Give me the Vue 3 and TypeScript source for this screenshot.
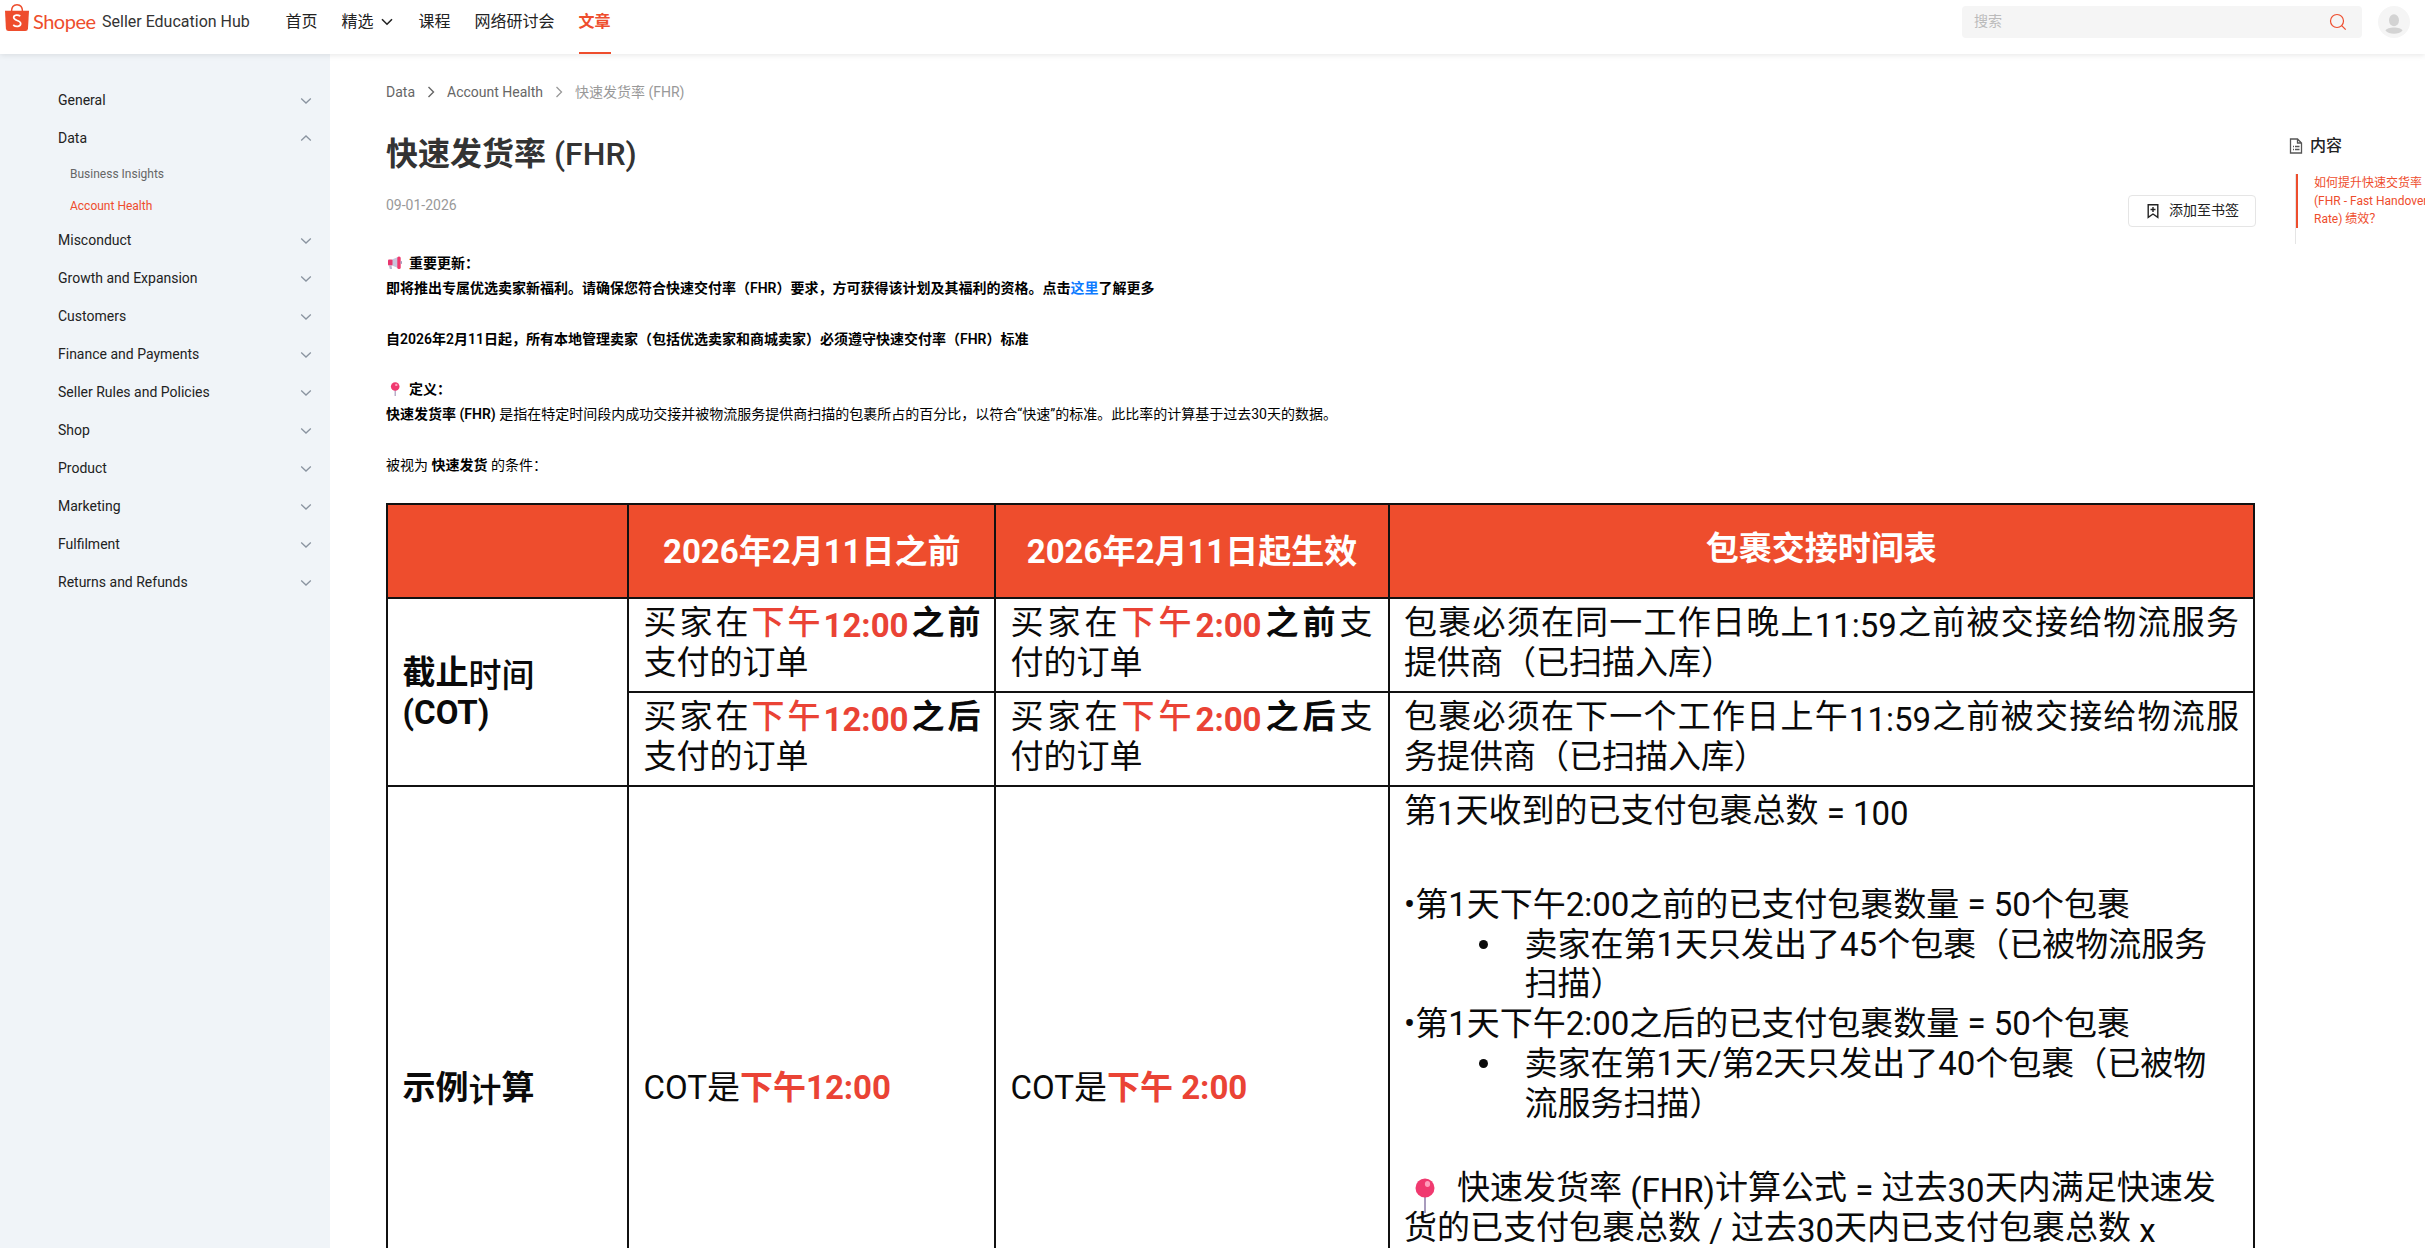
<script setup lang="ts">
interface MenuItem {
  label: string
  open?: boolean
  children?: { label: string; active?: boolean }[]
}

interface Run {
  t: string
  c?: string
}

interface Line {
  runs: Run[]
  width?: number
}

const menu: MenuItem[] = [
  { label: 'General' },
  {
    label: 'Data',
    open: true,
    children: [{ label: 'Business Insights' }, { label: 'Account Health', active: true }],
  },
  { label: 'Misconduct' },
  { label: 'Growth and Expansion' },
  { label: 'Customers' },
  { label: 'Finance and Payments' },
  { label: 'Seller Rules and Policies' },
  { label: 'Shop' },
  { label: 'Product' },
  { label: 'Marketing' },
  { label: 'Fulfilment' },
  { label: 'Returns and Refunds' },
]

const cutoff = (word: string): Line[][] => [
  [
    {
      width: 337,
      runs: [{ t: '买家在' }, { t: '下午', c: 'red semi' }, { t: '12:00', c: 'red bold low' }, { t: word, c: 'bold' }],
    },
    { runs: [{ t: '支付的订单' }], width: 162 },
  ],
  [
    {
      width: 362,
      runs: [{ t: '买家在' }, { t: '下午', c: 'red semi' }, { t: '2:00', c: 'red bold low' }, { t: word, c: 'bold' }, { t: '支' }],
    },
    { runs: [{ t: '付的订单' }], width: 130 },
  ],
]

const rows: Line[][][] = [
  [
    ...cutoff('之前'),
    [
      { width: 835, runs: [{ t: '包裹必须在同一工作日晚上' }, { t: '11:59', c: 'low' }, { t: '之前被交接给物流服务' }] },
      { runs: [{ t: '提供商（已扫描入库）' }] },
    ],
  ],
  [
    ...cutoff('之后'),
    [
      { width: 835, runs: [{ t: '包裹必须在下一个工作日上午' }, { t: '11:59', c: 'low' }, { t: '之前被交接给物流服' }] },
      { runs: [{ t: '务提供商（已扫描入库）' }] },
    ],
  ],
]
</script>

<template>
  <div class="page">
    <header class="top">
      <svg class="bag" width="26" height="29" viewBox="0 0 26 29">
        <path d="M7.500 8.500C7.500 4 10 1.700 13 1.700S18.500 4 18.500 8.500" fill="none" stroke="#ee4d2d" stroke-width="1.500" />
        <path d="M1 7.700h24l-1 17.800q-.2 2.500-2.700 2.500H4.600q-2.500 0-2.700-2.500z" fill="#ee4d2d" />
        <path d="M16.300 13.200c-2.200-1.800-6.600-1.600-6.600 1.400 0 3.500 7 2.300 7 6 0 3.300-4.700 3.700-7.500 1.400" fill="none" stroke="#fff" stroke-width="1.700" />
      </svg>
      <span class="brand">Shopee</span>
      <span class="hub">Seller Education Hub</span>
      <nav>
        <a>首页</a>
        <a>精选<svg width="12" height="8" viewBox="0 0 12 8"><path d="M1 1.200l5 5 5-5" fill="none" stroke="#222" stroke-width="1.600" /></svg></a>
        <a>课程</a>
        <a>网络研讨会</a>
        <a class="on">文章</a>
      </nav>
      <div class="search">
        <span>搜索</span>
        <svg width="18" height="18" viewBox="0 0 18 18" fill="none" stroke="#ee4d2d" stroke-width="1.200"><circle cx="8" cy="8" r="6.500" /><path d="M12.700 12.700l4 4" /></svg>
      </div>
      <svg class="avatar" width="32" height="32" viewBox="0 0 32 32">
        <circle cx="16" cy="16" r="16" fill="#f5f5f5" />
        <ellipse cx="16" cy="14.300" rx="5" ry="6" fill="#d3d3d3" />
        <path d="M7.500 24.500c1.500-4 15.500-4 17 0-3.500 4.400-13.500 4.400-17 0z" fill="#d3d3d3" />
      </svg>
    </header>

    <div class="body">
      <aside class="side">
        <template v-for="m in menu" :key="m.label">
          <div class="item">
            <span>{{ m.label }}</span>
            <svg width="12" height="8" viewBox="0 0 12 8" :class="{ up: m.open }"><path d="M1.200 1.500L6 6l4.800-4.500" fill="none" stroke="#8a94a0" stroke-width="1.300" /></svg>
          </div>
          <div v-if="m.children" class="subs">
            <div v-for="s in m.children" :key="s.label" class="sub" :class="{ active: s.active }">{{ s.label }}</div>
          </div>
        </template>
      </aside>

      <main class="main">
        <div class="crumbs">
          <span>Data</span>
          <svg width="8" height="12" viewBox="0 0 8 12"><path d="M1.500 1l5 5-5 5" fill="none" stroke="#666" stroke-width="1.400" /></svg>
          <span>Account Health</span>
          <svg width="8" height="12" viewBox="0 0 8 12"><path d="M1.500 1l5 5-5 5" fill="none" stroke="#999" stroke-width="1.300" /></svg>
          <span class="last">快速发货率 (FHR)</span>
        </div>
        <h1><span class="bold">快速发货率</span> (FHR)</h1>
        <div class="meta">
          <span class="date">09-01-2026</span>
          <button class="mark">
            <svg width="12" height="16" viewBox="0 0 12 16" fill="none" stroke="#222" stroke-width="1.400"><path d="M1.200 1.700h9.600v12.600L6 11l-4.800 3.300zM6 4v5M3.500 6.500h5" /></svg>
            <span>添加至书签</span>
          </button>
        </div>

        <div class="article">
          <p class="b">
            <svg class="emo" width="16" height="14" viewBox="0 0 16 14">
              <path d="M6 3.500L12 1v11L6 9.500z" fill="#c9c4dc" />
              <rect x="2" y="3.500" width="4.500" height="6" rx="1" fill="#e8366f" />
              <path d="M3 9.500h2.500l.6 3.500H3.800z" fill="#b9b3cf" />
              <rect x="11.300" y=".5" width="3.400" height="12.500" rx="1.500" fill="#f0396f" />
              <rect x="14.500" y="5" width="1.500" height="3" rx=".7" fill="#a59cb9" />
            </svg><span>重要更新：</span>
          </p>
          <p class="b">即将推出专属优选卖家新福利。请确保您符合快速交付率（FHR）要求，方可获得该计划及其福利的资格。点击<a>这里</a>了解更多</p>
          <p></p>
          <p class="b">自2026年2月11日起，所有本地管理卖家（包括优选卖家和商城卖家）必须遵守快速交付率（FHR）标准</p>
          <p></p>
          <p class="b">
            <svg class="emo" width="16" height="14" viewBox="0 0 16 14">
              <path d="M9.200 7v7" stroke="#a89bbd" stroke-width="1.200" />
              <circle cx="9.200" cy="4.500" r="4.300" fill="#f0396f" />
              <circle cx="10.300" cy="2.900" r="1.200" fill="#ff9dbb" />
            </svg><span>定义：</span>
          </p>
          <p><b>快速发货率 (FHR)</b> 是指在特定时间段内成功交接并被物流服务提供商扫描的包裹所占的百分比，以符合“快速”的标准。此比率的计算基于过去30天的数据。</p>
          <p></p>
          <p>被视为 <b>快速发货</b> 的条件：</p>
        </div>

        <div class="grid">
          <div class="cell head"></div>
          <div class="cell head"><span class="ln" style="width: 297px">2026年2月11日之前</span></div>
          <div class="cell head"><span class="ln" style="width: 330px">2026年2月11日起生效</span></div>
          <div class="cell head raise"><span>包裹交接时间表</span></div>

          <div class="cell label span2">
            <div><span class="bold">截止</span><span class="mid low">时间</span></div>
            <div class="bold">(COT)</div>
          </div>
          <template v-for="(r, ri) in rows" :key="ri">
            <div v-for="(cell, ci) in r" :key="ci" class="cell">
              <div v-for="(l, li) in cell" :key="li" :class="{ ln: l.width }" :style="l.width ? { width: l.width + 'px' } : {}"><span v-for="(x, xi) in l.runs" :key="xi" :class="x.c">{{ x.t }}</span></div>
            </div>
          </template>

          <div class="cell label"><div class="bold">示例<span class="mid low">计</span>算</div></div>
          <div class="cell center"><div>COT是<span class="red bold">下午12:00</span></div></div>
          <div class="cell center"><div>COT是<span class="red bold">下午 2:00</span></div></div>
          <div class="cell calc">
            <div>第<span class="low">1</span>天收到的已支付包裹总数<span class="low"> = 100</span></div>
            <div class="day">•第1天下午2:00之前的已支付包裹数量 = 50个包裹</div>
            <div class="bullet"><i></i>卖家在第1天只发出了45个包裹（已被物流服务<br />扫描）</div>
            <div>•第1天下午2:00之后的已支付包裹数量 = 50个包裹</div>
            <div class="bullet"><i></i>卖家在第1天/第2天只发出了40个包裹（已被物<br />流服务扫描）</div>
            <div class="formula">
              <svg width="22" height="36" viewBox="0 0 22 36">
                <path d="M11 18v17" stroke="#a89bbd" stroke-width="2" />
                <circle cx="11" cy="10" r="9.500" fill="#f0396f" />
                <ellipse cx="13.500" cy="6" rx="2.600" ry="3" fill="#ff9dbb" />
              </svg><span>快速发货率<span class="low"> (FHR)</span>计算公式<span class="low"> = </span>过去<span class="low">30</span>天内满足快速发</span>
            </div>
            <div>货的已支付包裹总数<span class="low"> / </span>过去<span class="low">30</span>天内已支付包裹总数<span class="low"> x</span></div>
          </div>
        </div>
      </main>

      <aside class="toc">
        <div class="toc-title">
          <svg width="14" height="16" viewBox="0 0 14 16" fill="none" stroke="#555" stroke-width="1.300"><path d="M1.500 1h7l4 4v10h-11zM8.500 1v4h4M4 8.500h1M6 8.500h4.500M4 11.500h1M6 11.500h4.500" /></svg>
          <span>内容</span>
        </div>
        <div class="toc-list"><div class="toc-item">如何提升快速交货率<br />(FHR - Fast Handover<br />Rate) 绩效？</div></div>
      </aside>
    </div>
  </div>
</template>

<style>
body {
  overflow: hidden;
}
</style>

<style scoped>
.page {
  width: 100%;
  height: 100vh;
  overflow: hidden;
  background: #fff;
  font-family: Roboto, 'Noto Sans CJK SC', sans-serif;
  font-size: 14px;
  color: #222;
}
.top {
  position: relative;
  z-index: 2;
  height: 54px;
  box-sizing: border-box;
  display: flex;
  align-items: flex-start;
  padding: 0 15px 0 4px;
  background: #fff;
  box-shadow: 0 1px 6px rgba(0, 0, 0, 0.1);
}
.bag {
  margin-top: 3px;
}
.brand {
  width: 72px;
  padding-left: 3px;
  box-sizing: border-box;
  font: 20px/42px Lato, sans-serif;
  color: #ee4d2d;
  letter-spacing: -0.5px;
}
.hub {
  width: 183.500px;
  font-size: 16px;
  line-height: 43px;
  color: #333;
  white-space: nowrap;
}
nav {
  display: flex;
  gap: 24px;
}
nav a {
  height: 54px;
  box-sizing: border-box;
  font-size: 16px;
  line-height: 43px;
}
nav svg {
  margin: 0 2px 1px 7px;
}
nav .on {
  color: #ee4d2d;
  font-weight: 700;
  border-bottom: 2px solid #ee4d2d;
}
.search {
  margin: 6px 16px 0 auto;
  width: 400px;
  height: 32px;
  box-sizing: border-box;
  padding: 0 15px 0 12px;
  display: flex;
  justify-content: space-between;
  align-items: center;
  background: #f5f5f5;
  border-radius: 4px;
  color: #bbb;
}
.search span {
  margin-bottom: 4px;
}
.avatar {
  margin-top: 6px;
}
.body {
  display: flex;
  height: calc(100% - 54px);
}
.side {
  flex: none;
  width: 330px;
  box-sizing: border-box;
  padding: 27px 18px 0 58px;
  background: #f0f4f8;
}
.item {
  height: 38px;
  display: flex;
  align-items: center;
  justify-content: space-between;
}
.item svg {
  margin-top: 1px;
}
.item svg.up {
  transform: rotate(180deg);
  margin-top: -1px;
}
.subs {
  padding: 1px 0 0 12px;
  height: 63px;
}
.sub {
  height: 32px;
  line-height: 32px;
  font-size: 12px;
  color: #666;
}
.sub.active {
  color: #ee4d2d;
}
.main {
  flex: none;
  width: 1870px;
  margin-left: 56px;
}
.crumbs {
  display: flex;
  align-items: center;
  height: 20px;
  margin-top: 28px;
  gap: 12px;
  color: #666;
  line-height: 20px;
}
.crumbs .last {
  color: #999;
}
h1 {
  margin: 27px 0 0;
  font-size: 32px;
  line-height: 50px;
  font-weight: 500;
  color: #333;
}
.meta {
  display: flex;
  justify-content: space-between;
  align-items: flex-start;
  height: 72px;
}
.date {
  color: #999;
  line-height: 20px;
  padding-top: 16px;
}
.mark {
  margin-top: 16px;
  width: 128px;
  height: 32px;
  border: 1px solid #e5e5e5;
  border-radius: 4px;
  background: #fff;
  display: flex;
  align-items: center;
  gap: 10px;
  padding: 0 0 0 18px;
  font: inherit;
  color: #222;
  white-space: nowrap;
}
.mark span {
  margin-bottom: 4px;
}
.article {
  color: #000;
}
.article p {
  margin: 0;
  height: 25.200px;
  line-height: 25.200px;
  white-space: nowrap;
}
.article .b,
b {
  font-weight: 600;
}
.article a {
  color: #0d7bff;
}
.emo {
  margin: 0 7px -2px 0;
}
.grid {
  margin-top: 25px;
  width: 1869px;
  box-sizing: border-box;
  display: grid;
  grid-template-columns: 241px 367px 393.500px 865.500px;
  grid-template-rows: 94.300px 94.200px 94.200px 602px;
  border: solid #111;
  border-width: 2px 0 0 2px;
  color: #0a0a0a;
  font-size: 33px;
  line-height: 39.700px;
}
.cell {
  border-right: 2px solid #111;
  border-bottom: 2px solid #111;
  box-sizing: border-box;
  padding: 4px 0 0 14.500px;
  white-space: nowrap;
}
.head {
  display: flex;
  align-items: center;
  justify-content: center;
  padding: 2px 0 0;
  background: #ee4d2d;
  color: #fff;
  font-weight: 700;
}
.head.raise {
  padding: 0 0 4px;
}
.ln {
  display: block;
  text-align: justify;
  text-align-last: justify;
}
.label {
  display: flex;
  flex-direction: column;
  justify-content: center;
  padding-top: 1px;
}
.span2 {
  grid-row: span 2;
}
.center {
  display: flex;
  align-items: center;
  padding-top: 0;
}
.bold {
  font-weight: 700;
}
.semi,
.mid {
  font-weight: 500;
}
.red {
  color: #ea4335;
}
.low {
  position: relative;
  top: 3px;
  white-space: pre;
}
.day {
  margin-top: 54px;
}
.bullet {
  position: relative;
  padding-left: 120.500px;
}
.bullet i {
  position: absolute;
  left: 75px;
  top: 15px;
  width: 9px;
  height: 9px;
  border-radius: 50%;
  background: #0a0a0a;
}
.formula {
  margin-top: 45px;
  height: 40px;
  display: flex;
}
.formula svg {
  margin: 10px 21px 0 10px;
}
.toc {
  flex: none;
  width: 200px;
  margin-left: 33px;
  padding-top: 80px;
}
.toc-title {
  display: flex;
  align-items: center;
  gap: 7px;
  height: 24px;
  font-size: 16px;
  font-weight: 500;
}
.toc-title span {
  margin-bottom: 4px;
}
.toc-list {
  margin: 16px 0 0 6px;
  height: 70px;
  border-left: 1px solid #e5e5e5;
}
.toc-item {
  border-left: 2px solid #ee4d2d;
  padding-left: 16px;
  font-size: 12px;
  line-height: 18px;
  color: #ee4d2d;
  white-space: nowrap;
}
</style>
